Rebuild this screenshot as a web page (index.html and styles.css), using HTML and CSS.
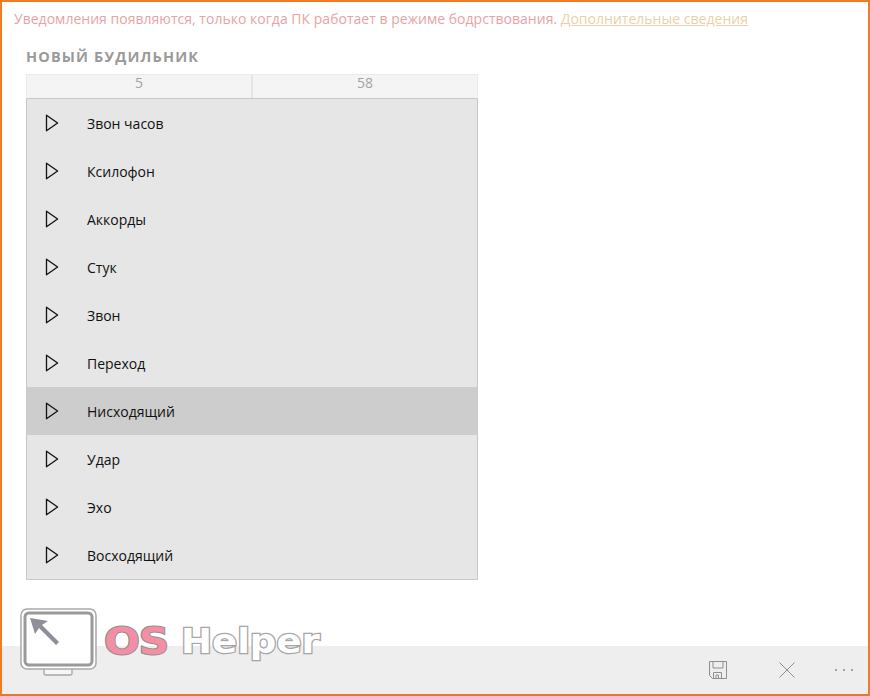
FILE: index.html
```html
<!DOCTYPE html>
<html lang="ru">
<head>
<meta charset="utf-8">
<title>Новый будильник</title>
<link rel="stylesheet" href="styles.css">
</head>
<body>
<div class="app">
  <main class="content">
    <p class="notice">Уведомления появляются, только когда ПК работает в режиме бодрствования. <a class="notice-link" href="#">Дополнительные сведения</a></p>
    <section class="panel">
      <h1 class="title">НОВЫЙ БУДИЛЬНИК</h1>
      <div class="picker">
        <div class="picker-cell">5</div>
        <div class="picker-cell">58</div>
      </div>
      <ul class="sounds">
        <li class="sound"><svg class="play" viewBox="0 0 14 18"><path d="M1.5 1.2v15.6L12.6 9z"/></svg><span>Звон часов</span></li>
        <li class="sound"><svg class="play" viewBox="0 0 14 18"><path d="M1.5 1.2v15.6L12.6 9z"/></svg><span>Ксилофон</span></li>
        <li class="sound"><svg class="play" viewBox="0 0 14 18"><path d="M1.5 1.2v15.6L12.6 9z"/></svg><span>Аккорды</span></li>
        <li class="sound"><svg class="play" viewBox="0 0 14 18"><path d="M1.5 1.2v15.6L12.6 9z"/></svg><span>Стук</span></li>
        <li class="sound"><svg class="play" viewBox="0 0 14 18"><path d="M1.5 1.2v15.6L12.6 9z"/></svg><span>Звон</span></li>
        <li class="sound"><svg class="play" viewBox="0 0 14 18"><path d="M1.5 1.2v15.6L12.6 9z"/></svg><span>Переход</span></li>
        <li class="sound selected"><svg class="play" viewBox="0 0 14 18"><path d="M1.5 1.2v15.6L12.6 9z"/></svg><span>Нисходящий</span></li>
        <li class="sound"><svg class="play" viewBox="0 0 14 18"><path d="M1.5 1.2v15.6L12.6 9z"/></svg><span>Удар</span></li>
        <li class="sound"><svg class="play" viewBox="0 0 14 18"><path d="M1.5 1.2v15.6L12.6 9z"/></svg><span>Эхо</span></li>
        <li class="sound"><svg class="play" viewBox="0 0 14 18"><path d="M1.5 1.2v15.6L12.6 9z"/></svg><span>Восходящий</span></li>
      </ul>
    </section>
  </main>
  <footer class="commandbar">
    <svg class="cmd-icon" viewBox="0 0 18 18"><path d="M.5.5h17v17H3.5l-3-3zM4 .5v6.5h10V.5M4.5 17.5v-6h8v6M7 17.5v-3.5h2.5v3.5"/></svg>
    <svg class="cmd-icon" viewBox="0 0 18 18"><path d="M1.5 1.5l15 15M16.500 1.500l-15 15"/></svg>
    <div class="more"><i></i><i></i><i></i></div>
  </footer>
  <div class="logo">
    <svg class="logo-mark" viewBox="0 0 78 70">
      <path class="lm-stand" d="M24 61v4.500a1.500 1.500 0 0 0 1.500 1.500h25a1.500 1.500 0 0 0 1.500-1.500V61"/>
      <rect class="lm-outer" x="1" y="1" width="75" height="60" rx="6"/>
      <rect class="lm-inner" x="5" y="5" width="67" height="52" rx="4"/>
      <path class="lm-arrow" d="M10 10l5 16 4-6 17 17 3-3-17-17 6-4z"/>
    </svg>
    <span class="logo-os">OS</span>
    <span class="logo-helper">Helper</span>
  </div>
</div>
</body>
</html>
```
FILE: styles.css
```css
* { box-sizing: border-box; }
html, body { margin: 0; padding: 0; }
body { width: 870px; height: 696px; overflow: hidden; font-family: "Open Sans", "Noto Sans", sans-serif; background: #fff; }
.app { position: relative; display: flex; flex-direction: column; width: 870px; height: 696px; border: 2px solid #f47b20; border-bottom-color: #e8792a; background: #fff; }
.content { flex: 1; padding: 8px 0 0 12px; }
.notice { margin: 0; font-size: 14px; line-height: 17px; color: #e8a3a3; letter-spacing: .02px; white-space: nowrap; }
.notice-link { color: #ecd0a8; text-decoration: underline; }
.panel { margin: 0 0 0 12px; width: 452px; }
.title { margin: 20px 0 0; font-size: 14.500px; line-height: 20px; font-weight: 700; color: #9a9a9a; letter-spacing: 1.15px; }
.picker { display: flex; height: 25px; margin-top: 7px; background: #f4f4f4; border: 1px solid #ebebeb; border-bottom: 1px solid #c8c8c8; }
.picker-cell { flex: 1; text-align: center; font-size: 14px; line-height: 15px; color: #a3a3a3; }
.picker-cell + .picker-cell { border-left: 2px solid #e4e4e4; }
.sounds { list-style: none; margin: 0; padding: 0; background: #e6e6e6; border: 1px solid #c8c8c8; border-top: 0; }
.sound { display: flex; align-items: center; height: 48px; padding-left: 18px; font-size: 14px; color: #111; }
.sound.selected { background: #cdcdcd; }
.play { width: 14px; height: 18px; margin-right: 28px; flex: none; }
.play path { fill: none; stroke: #111; stroke-width: 1.300; stroke-linejoin: round; }
.commandbar { flex: none; display: flex; align-items: center; height: 48px; background: #eeeeee; padding-left: 707px; padding-bottom: 1px; }
.cmd-icon { width: 18px; height: 18px; margin-right: 51px; flex: none; }
.cmd-icon path { fill: none; stroke: #8f8f8f; stroke-width: 1; }
.more { display: flex; gap: 6px; margin-left: -12px; }
.more i { width: 2px; height: 2px; background: #a0a0a0; }
.logo { position: absolute; left: 18px; top: 606px; width: 320px; height: 70px; }
.logo-mark { position: absolute; left: 0; top: 0; width: 78px; height: 70px; }
.lm-stand { fill: #f6f6f6; stroke: #a6a6a6; stroke-width: 1.300; }
.lm-outer { fill: #fff; stroke: #a9a9a9; stroke-width: 1.500; }
.lm-inner { fill: rgba(255,255,255,.85); stroke: #9a9a9a; stroke-width: 3; }
.lm-arrow { fill: #8f8f9a; }
.logo-os, .logo-helper { position: absolute; font-family: "DejaVu Sans", sans-serif; font-weight: 700; line-height: 1; paint-order: stroke fill; transform-origin: left center; }
.logo-os { left: 84px; top: 15px; font-size: 37px; color: #f48ea4; -webkit-text-stroke: 2px #8f8f8f; letter-spacing: -1px; transform: scaleX(1.14); }
.logo-helper { left: 161px; top: 16px; font-size: 34px; color: #fff; -webkit-text-stroke: 2.500px #a6a6a6; transform: scaleX(1.09); }
```
